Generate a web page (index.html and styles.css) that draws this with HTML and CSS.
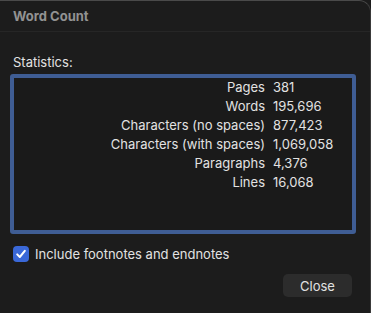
FILE: index.html
```html
<!DOCTYPE html>
<html lang="en">

<head>
    <meta charset="UTF-8">
    <title>Word Count</title>
    <link rel="stylesheet" href="styles.css">
</head>

<body>

    <div class="window">
        <div class="titlebar">Word Count</div>

        <div class="content">
            <div class="section-label">Statistics:</div>

            <div class="stats-box">
                <div class="stats">
                    <span class="name">Pages</span><span class="value">381</span>
                    <span class="name">Words</span><span class="value">195,696</span>
                    <span class="name">Characters (no spaces)</span><span class="value">877,423</span>
                    <span class="name">Characters (with spaces)</span><span class="value">1,069,058</span>
                    <span class="name">Paragraphs</span><span class="value">4,376</span>
                    <span class="name">Lines</span><span class="value">16,068</span>
                </div>
            </div>

            <label class="check-row">
                <span class="checkbox">
                    <svg width="12" height="12" viewBox="0 0 12 12">
                        <path d="M2.2 6.4 L4.8 9 L9.8 2.8" fill="none" stroke="#fff" stroke-width="2" stroke-linecap="round" stroke-linejoin="round" />
                    </svg>
                </span>
                Include footnotes and endnotes
            </label>

            <div class="actions">
                <button class="btn-close">Close</button>
            </div>
        </div>
    </div>

</body>

</html>
```

FILE: styles.css
```css
* {
    margin: 0;
    padding: 0;
    box-sizing: border-box;
    font-family: 'Inter', 'Noto Sans', sans-serif;
}

body {
    background-color: #1c1c1c;
    width: 371px;
    height: 313px;
    overflow: hidden;
}

.window {
    height: 313px;
    background: #1c1c1c;
    border-top: 1px solid #4a4a4a;
    border-right: 1px solid #3a3a3a;
    border-top-right-radius: 12px;
}

.titlebar {
    height: 31px;
    padding-left: 13px;
    line-height: 31px;
    font-size: 13px;
    font-weight: bold;
    color: #929292;
    border-bottom: 1px solid #262626;
}

.content {
    padding: 0 14px 0 10px;
}

.section-label {
    margin-top: 21px;
    padding-left: 3px;
    font-size: 13px;
    line-height: 18px;
    color: #e2e2e2;
}

.stats-box {
    margin-top: 3px;
    height: 160px;
    border: 4px solid #3f5d94;
    border-radius: 3px;
    background: #1a1a1a;
}

.stats {
    display: grid;
    grid-template-columns: 251px auto;
    column-gap: 8px;
    font-size: 13px;
    line-height: 19px;
    color: #e2e2e2;
}

.name {
    text-align: right;
}

.check-row {
    display: flex;
    align-items: center;
    gap: 6px;
    margin-top: 11px;
    padding-left: 3px;
    font-size: 13px;
    line-height: 18px;
    color: #e2e2e2;
}

.checkbox {
    width: 16px;
    height: 16px;
    border-radius: 4px;
    background: #3a68d8;
    display: flex;
    align-items: center;
    justify-content: center;
}

.actions {
    display: flex;
    justify-content: flex-end;
    margin-top: 11px;
    padding-right: 4px;
}

.btn-close {
    width: 69px;
    height: 23px;
    border: none;
    border-radius: 5px;
    background: #2c2c2c;
    color: #e2e2e2;
    font-size: 13px;
}
```
